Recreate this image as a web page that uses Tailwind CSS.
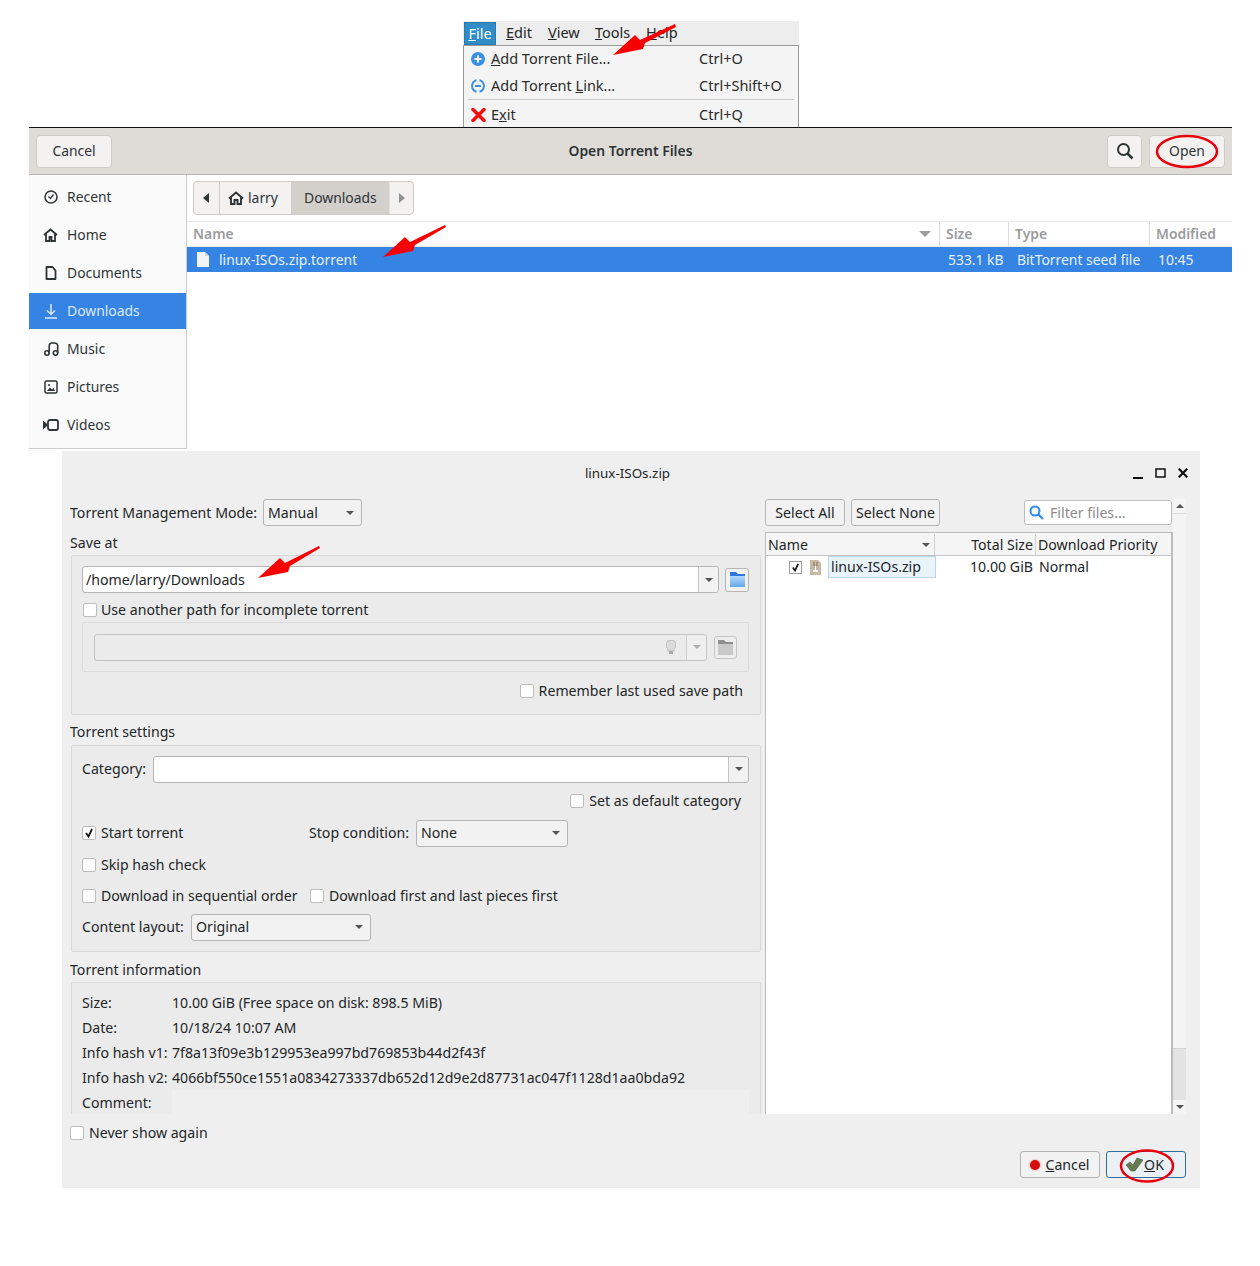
<!DOCTYPE html>
<html lang="en">
<head>
<meta charset="utf-8">
<title>qBittorrent add torrent steps</title>
<script src="https://cdn.jsdelivr.net/npm/@tailwindcss/browser@4"></script>
</head>
<body class="bg-white">
<div class="relative w-[1260px] h-[1266px] overflow-hidden bg-white font-['Noto_Sans','Open_Sans',sans-serif] text-[14.15px] leading-[20px] text-[#2b2b2b]">

  <!-- qBittorrent File menu -->
  <section class="absolute left-[463px] top-[21px] w-[336px] h-[106px] bg-[#f0f0f0] flex flex-col text-[14.5px] [&_span]:-translate-y-px">
    <div class="h-[24px] flex items-center bg-[#ededed] text-[#232627]">
      <div class="ml-[1px] w-[32px] h-[23px] mt-[1px] bg-[#308cc6] border border-[#2a7cb0] text-white flex items-center justify-center"><span><span class="underline">F</span>ile</span></div>
      <span class="ml-[10px] w-[42px]"><span class="underline">E</span>dit</span>
      <span class="w-[47px]"><span class="underline">V</span>iew</span>
      <span class="w-[51px]"><span class="underline">T</span>ools</span>
      <span><span class="underline">H</span>elp</span>
    </div>
    <div class="flex-1 border border-b-0 border-[#9b9b9b] bg-[#f4f4f4] flex flex-col">
      <div class="h-[26px] flex items-center pl-[7px]">
        <svg class="w-[14px] h-[14px]" viewBox="0 0 14 14"><circle cx="7" cy="7" r="7" fill="#3a8fe8"/><path d="M7 3.500v7M3.500 7h7" stroke="#fff" stroke-width="2"/></svg>
        <span class="ml-[6px] w-[208px]"><span class="underline">A</span>dd Torrent File...</span><span>Ctrl+O</span>
      </div>
      <div class="h-[27px] flex items-center pl-[7px]">
        <svg class="w-[14px] h-[14px]" viewBox="0 0 14 14"><circle cx="7" cy="7" r="6" fill="none" stroke="#3a8fe8" stroke-width="2"/><path d="M5.500 1h3M5.500 13h3" stroke="#f4f4f4" stroke-width="2.500"/><path d="M4 7h6" stroke="#3a8fe8" stroke-width="2"/></svg>
        <span class="ml-[6px] w-[208px]">Add Torrent <span class="underline">L</span>ink...</span><span>Ctrl+Shift+O</span>
      </div>
      <div class="mx-[4px] h-[1px] bg-[#c8c8c8]"></div>
      <div class="h-[30px] flex items-center pl-[7px]">
        <svg class="w-[15px] h-[14px]" viewBox="0 0 15 14"><path d="M2 1.500 13 12.500M13 1.500 2 12.500" stroke="#f01010" stroke-width="3.500" stroke-linecap="round"/></svg>
        <span class="ml-[5px] w-[208px]">E<span class="underline">x</span>it</span><span>Ctrl+Q</span>
      </div>
    </div>
  </section>

  <!-- GTK file chooser -->
  <section class="absolute left-[29px] top-[127px] w-[1203px] h-[322px] bg-white border-t border-[#111] flex flex-col text-[#2e3436] text-[13.9px]">
    <header class="h-[47px] shrink-0 bg-[#dfdcd8] border-b border-[#b8b4af] flex items-center pl-[7px] pr-[7px]">
      <div class="w-[118px] shrink-0 flex">
        <div class="w-[76px] h-[33px] rounded-[4px] bg-[#f4f2f1] border border-[#cfcbc6] flex items-center justify-center"><span>Cancel</span></div>
      </div>
      <div class="flex-1 flex justify-center font-semibold"><span>Open Torrent Files</span></div>
      <div class="w-[35px] h-[33px] rounded-[4px] bg-[#f4f2f1] border border-[#cfcbc6] flex items-center justify-center mr-[7px]">
        <svg class="w-[18px] h-[18px]" viewBox="0 0 18 18"><circle cx="7.500" cy="7.500" r="5.500" fill="none" stroke="#2e3436" stroke-width="2"/><path d="M11.500 11.500 16.500 16.500" stroke="#2e3436" stroke-width="2.500"/></svg>
      </div>
      <div class="w-[76px] h-[33px] rounded-[4px] bg-[#f4f2f1] border border-[#cfcbc6] flex items-center justify-center"><span>Open</span></div>
    </header>
    <div class="flex-1 flex min-h-0">
      <aside class="w-[158px] shrink-0 bg-[#fafafa] border-r border-b border-[#cfcdc9] pt-[4px] flex flex-col gap-[2px]">
        <div class="h-[36px] flex items-center pl-[15px]">
          <svg class="w-[14px] h-[14px]" viewBox="0 0 14 14"><circle cx="7" cy="7" r="6" fill="none" stroke="#2e3436" stroke-width="1.500"/><path d="M4.500 6.500 6.500 8.500 9.500 4.500" fill="none" stroke="#2e3436" stroke-width="1.300"/></svg>
          <span class="ml-[9px]">Recent</span></div>
        <div class="h-[36px] flex items-center pl-[14px]">
          <svg class="w-[15px] h-[14px]" viewBox="0 0 15 14"><path d="M1 7 7.500 1.500 14 7M3 6v7h3.500V9h2v4H12V6" fill="none" stroke="#2e3436" stroke-width="1.800"/></svg>
          <span class="ml-[9px]">Home</span></div>
        <div class="h-[36px] flex items-center pl-[16px]">
          <svg class="w-[12px] h-[14px]" viewBox="0 0 12 14"><path d="M1.500 1h6l3 3.500V13h-9z" fill="none" stroke="#2e3436" stroke-width="1.800" stroke-linejoin="round"/></svg>
          <span class="ml-[10px]">Documents</span></div>
        <div class="h-[36px] flex items-center pl-[15px] bg-[#3584e4] text-[#dbe8fa]">
          <svg class="w-[14px] h-[15px]" viewBox="0 0 14 15"><path d="M7 0v10M3 6.500 7 10.500 11 6.500M1 14h12" fill="none" stroke="#dbe8fa" stroke-width="1.500"/></svg>
          <span class="ml-[9px]">Downloads</span></div>
        <div class="h-[36px] flex items-center pl-[15px]">
          <svg class="w-[15px] h-[14px]" viewBox="0 0 15 14"><circle cx="3" cy="11" r="2.200" fill="none" stroke="#2e3436" stroke-width="1.600"/><circle cx="11.500" cy="11" r="2.200" fill="none" stroke="#2e3436" stroke-width="1.600"/><path d="M5.200 11V4q0-3 3-3h2q3.500 0 3.500 3v7" fill="none" stroke="#2e3436" stroke-width="1.600"/></svg>
          <span class="ml-[8px]">Music</span></div>
        <div class="h-[36px] flex items-center pl-[15px]">
          <svg class="w-[14px] h-[14px]" viewBox="0 0 14 14"><rect x="1" y="1" width="12" height="12" rx="1.500" fill="none" stroke="#2e3436" stroke-width="1.500"/><path d="M3 11 6 7.500 8 9.500 9.500 8 11 11z" fill="#2e3436"/><circle cx="5" cy="5" r="1" fill="#2e3436"/></svg>
          <span class="ml-[9px]">Pictures</span></div>
        <div class="h-[36px] flex items-center pl-[14px]">
          <svg class="w-[16px] h-[12px]" viewBox="0 0 16 12"><path d="M0 1.500 4 5V7L0 10.500z" fill="#2e3436"/><rect x="5" y="1" width="10" height="10" rx="2" fill="none" stroke="#2e3436" stroke-width="1.800"/></svg>
          <span class="ml-[8px]">Videos</span></div>
      </aside>
      <div class="flex-1 flex flex-col min-w-0">
        <div class="h-[46px] shrink-0 pt-[6px] pl-[6px]">
          <div class="w-[221px] h-[34px] flex rounded-[4px] border border-[#cfcbc6] overflow-hidden bg-[#f4f2f1]">
            <div class="w-[26px] border-r border-[#cfcbc6] flex items-center justify-center"><svg class="w-[7px] h-[10px]" viewBox="0 0 7 10"><path d="M6 0v10L0 5z" fill="#2e3436"/></svg></div>
            <div class="w-[72px] border-r border-[#cfcbc6] flex items-center pl-[8px] gap-[4px]">
              <svg class="w-[16px] h-[14px]" viewBox="0 0 16 14"><path d="M1 7.500 8 1.500 15 7.500M3 6.500V13h3.500V9h3v4H13V6.500" fill="none" stroke="#2e3436" stroke-width="1.900"/></svg>
              <span>larry</span></div>
            <div class="w-[97px] bg-[#d3cfcb] flex items-center pl-[12px]"><span>Downloads</span></div>
            <div class="flex-1 border-l border-[#e4e1de] flex items-center justify-center"><svg class="w-[7px] h-[10px]" viewBox="0 0 7 10"><path d="M1 0v10l6-5z" fill="#8f9294"/></svg></div>
          </div>
        </div>
        <div class="h-[26px] shrink-0 flex items-center border-t border-b border-[#ecebe9] font-semibold text-[#9a9c9d]">
          <div class="w-[752px] pl-[6px] flex justify-between items-center pr-[8px]"><span>Name</span><svg class="w-[12px] h-[6px]" viewBox="0 0 12 6"><path d="M0 0h12L6 6z" fill="#9a9c9d"/></svg></div>
          <div class="w-[69px] h-full border-l border-[#dcdcda] pl-[6px] flex items-center"><span>Size</span></div>
          <div class="w-[141px] h-full border-l border-[#dcdcda] pl-[6px] flex items-center"><span>Type</span></div>
          <div class="flex-1 h-full border-l border-[#dcdcda] pl-[6px] flex items-center"><span>Modified</span></div>
        </div>
        <div class="h-[25px] shrink-0 flex items-center bg-[#3584e4] text-[#e6f0fc]">
          <div class="w-[761px] pl-[10px] flex items-center gap-[10px]">
            <svg class="w-[12px] h-[15px]" viewBox="0 0 12 15"><path d="M0 0h8l4 4v11H0z" fill="#f2f4f5"/><path d="M8 0v4h4" fill="#cfd8e2"/></svg>
            <span>linux-ISOs.zip.torrent</span></div>
          <span class="w-[69px]">533.1 kB</span>
          <span class="w-[141px]">BitTorrent seed file</span>
          <span>10:45</span>
        </div>
      </div>
    </div>
  </section>

  <!-- qBittorrent add torrent dialog -->
  <section class="absolute left-[62px] top-[451px] w-[1138px] h-[737px] bg-[#efefef] flex flex-col text-[#232627]">
    <header class="h-[48px] shrink-0 flex items-center relative">
      <div class="w-full flex justify-center text-[13.4px] -mt-[4px] pr-[7px]"><span>linux-ISOs.zip</span></div>
      <div class="absolute right-[12px] top-[16px] flex items-center gap-[12px]">
        <svg class="w-[10px] h-[12px]" viewBox="0 0 10 12"><path d="M0 11h10" stroke="#111" stroke-width="2"/></svg>
        <svg class="w-[11px] h-[10px]" viewBox="0 0 11 10"><rect x="1" y="1" width="9" height="8" fill="none" stroke="#111" stroke-width="1.500"/></svg>
        <svg class="w-[10px] h-[10px]" viewBox="0 0 10 10"><path d="M.7.7 9.300 9.300M9.300.7.7 9.300" stroke="#111" stroke-width="2.200"/></svg>
      </div>
    </header>
    <div class="h-[615px] shrink-0 flex">
      <!-- left column -->
      <div class="w-[703px] shrink-0 pl-[8px] pr-[4px] flex flex-col min-h-0 overflow-hidden">
        <div class="h-[27px] shrink-0 flex items-center gap-[6px]">
          <span class="w-[187px] whitespace-nowrap">Torrent Management Mode:</span>
          <div class="w-[99px] h-[27px] rounded-[3px] border border-[#b5b5b5] bg-[#f2f2f2] flex items-center justify-between pl-[4px] pr-[7px]"><span>Manual</span><svg class="w-[8px] h-[4px]" viewBox="0 0 8 4"><path d="M0 0h8L4 4z" fill="#555"/></svg></div>
        </div>
        <div class="h-[29px] shrink-0 flex items-center pt-[5px]"><span>Save at</span></div>
        <div class="h-[160px] ml-[1px] shrink-0 bg-[#ebebeb] border border-[#d9d9d9] rounded-[2px] px-[10px] pt-[10px] flex flex-col">
          <div class="flex items-center h-[27px] shrink-0">
            <div class="w-[637px] h-[27px] rounded-[3px] border border-[#b5b5b5] bg-white flex items-center">
              <span class="flex-1 pl-[3px]">/home/larry/Downloads</span>
              <div class="w-[20px] h-full border-l border-[#c4c4c4] bg-[#f2f2f2] flex items-center justify-center rounded-r-[3px]"><svg class="w-[8px] h-[4px]" viewBox="0 0 8 4"><path d="M0 0h8L4 4z" fill="#555"/></svg></div>
            </div>
            <div class="ml-[6px] w-[24px] h-[24px] rounded-[3px] border border-[#b5b5b5] bg-[#f2f2f2] flex items-center justify-center">
              <svg class="w-[17px] h-[17px]" viewBox="0 0 17 17"><defs><linearGradient id="fb" x1="0" y1="0" x2="0" y2="1"><stop offset="0" stop-color="#b5d9f8"/><stop offset="1" stop-color="#62a8ec"/></linearGradient></defs><path d="M1 1h6l2 2h7v13H1z" fill="#2a78dc"/><path d="M1 5h15v11H1z" fill="url(#fb)"/></svg>
            </div>
          </div>
          <div class="h-[29px] shrink-0 flex items-center gap-[4px] pt-[4px]">
            <span class="w-[14px] h-[14px] border border-[#bdbdbd] bg-white rounded-[2px] ml-[1px]"></span><span>Use another path for incomplete torrent</span>
          </div>
          <div class="h-[50px] shrink-0 w-[667px] border border-[#dcdcdc] rounded-[2px] pl-[11px] flex items-center">
            <div class="w-[613px] h-[27px] rounded-[3px] border border-[#c4c4c4] bg-[#ebebeb] flex items-center justify-end">
              <svg class="w-[10px] h-[14px] mr-[10px]" viewBox="0 0 10 14"><path d="M5 0a5 5 0 0 1 3 9v2H2V9a5 5 0 0 1 3-9z" fill="#dcdcdc" stroke="#bbb"/><rect x="3" y="11" width="4" height="3" fill="#aaa"/></svg>
              <div class="w-[20px] h-full border-l border-[#cfcfcf] bg-[#efefef] flex items-center justify-center rounded-r-[3px]"><svg class="w-[8px] h-[4px]" viewBox="0 0 8 4"><path d="M0 0h8L4 4z" fill="#b0b0b0"/></svg></div>
            </div>
            <div class="ml-[7px] w-[23px] h-[23px] rounded-[3px] border border-[#c4c4c4] bg-[#ededed] flex items-center justify-center">
              <svg class="w-[17px] h-[17px]" viewBox="0 0 17 17"><path d="M1 1h6l2 2h7v13H1z" fill="#8f8f8f"/><path d="M1 5h15v11H1z" fill="#c9c9c9"/></svg>
            </div>
          </div>
          <div class="h-[38px] shrink-0 flex items-center justify-end gap-[5px] pr-[7px]">
            <span class="w-[14px] h-[14px] border border-[#bdbdbd] bg-white rounded-[2px]"></span><span>Remember last used save path</span>
          </div>
        </div>
        <div class="h-[30px] shrink-0 flex items-center pt-[4px]"><span>Torrent settings</span></div>
        <div class="h-[207px] ml-[1px] shrink-0 bg-[#ebebeb] border border-[#d9d9d9] rounded-[2px] pl-[10px] pr-[11px] flex flex-col">
          <div class="h-[46px] shrink-0 flex items-center gap-[7px]">
            <span class="w-[64px] whitespace-nowrap">Category:</span>
            <div class="flex-1 h-[27px] rounded-[3px] border border-[#b5b5b5] bg-white flex justify-end">
              <div class="w-[20px] h-full border-l border-[#c4c4c4] bg-[#f2f2f2] flex items-center justify-center rounded-r-[3px]"><svg class="w-[8px] h-[4px]" viewBox="0 0 8 4"><path d="M0 0h8L4 4z" fill="#555"/></svg></div>
            </div>
          </div>
          <div class="h-[18px] shrink-0 flex items-center justify-end gap-[5px] pr-[8px]">
            <span class="w-[14px] h-[14px] border border-[#bdbdbd] bg-white rounded-[2px]"></span><span>Set as default category</span>
          </div>
          <div class="h-[46px] shrink-0 flex items-center">
            <span class="w-[14px] h-[14px] border border-[#bdbdbd] bg-white rounded-[2px] flex items-center justify-center"><svg class="w-[10px] h-[10px]" viewBox="0 0 10 10"><path d="M2 5 4.500 8.500 8 1" fill="none" stroke="#111" stroke-width="1.800"/></svg></span>
            <span class="ml-[5px] w-[208px]">Start torrent</span>
            <span class="w-[100px] whitespace-nowrap">Stop condition:</span>
            <div class="ml-[7px] w-[152px] h-[27px] rounded-[3px] border border-[#b5b5b5] bg-[#f2f2f2] flex items-center justify-between pl-[4px] pr-[7px]"><span>None</span><svg class="w-[8px] h-[4px]" viewBox="0 0 8 4"><path d="M0 0h8L4 4z" fill="#555"/></svg></div>
          </div>
          <div class="h-[18px] shrink-0 flex items-center gap-[5px]">
            <span class="w-[14px] h-[14px] border border-[#bdbdbd] bg-white rounded-[2px]"></span><span>Skip hash check</span>
          </div>
          <div class="h-[44px] shrink-0 flex items-center">
            <span class="w-[14px] h-[14px] border border-[#bdbdbd] bg-white rounded-[2px]"></span><span class="ml-[5px] w-[209px] whitespace-nowrap">Download in sequential order</span>
            <span class="w-[14px] h-[14px] border border-[#bdbdbd] bg-white rounded-[2px]"></span><span class="ml-[5px]">Download first and last pieces first</span>
          </div>
          <div class="h-[18px] shrink-0 flex items-center gap-[7px]">
            <span class="w-[102px] whitespace-nowrap">Content layout:</span>
            <div class="w-[180px] h-[27px] rounded-[3px] border border-[#b5b5b5] bg-[#f2f2f2] flex items-center justify-between pl-[4px] pr-[7px]"><span>Original</span><svg class="w-[8px] h-[4px]" viewBox="0 0 8 4"><path d="M0 0h8L4 4z" fill="#555"/></svg></div>
          </div>
        </div>
        <div class="h-[30px] shrink-0 flex items-center pt-[6px]"><span>Torrent information</span></div>
        <div class="h-[132px] ml-[1px] shrink-0 bg-[#ebebeb] border-l border-t border-r border-[#d9d9d9] rounded-t-[2px] pl-[10px] pr-[11px] pt-[7px] flex flex-col">
          <div class="h-[25px] shrink-0 flex items-center"><span class="w-[90px]">Size:</span><span>10.00 GiB (Free space on disk: 898.5 MiB)</span></div>
          <div class="h-[25px] shrink-0 flex items-center"><span class="w-[90px]">Date:</span><span>10/18/24 10:07 AM</span></div>
          <div class="h-[25px] shrink-0 flex items-center"><span class="w-[90px]">Info hash v1:</span><span>7f8a13f09e3b129953ea997bd769853b44d2f43f</span></div>
          <div class="h-[25px] shrink-0 flex items-center"><span class="w-[90px]">Info hash v2:</span><span>4066bf550ce1551a0834273337db652d12d9e2d87731ac047f1128d1aa0bda92</span></div>
          <div class="flex-1 flex"><span class="w-[90px] pt-[3px]">Comment:</span><div class="flex-1 bg-[#efefef]"></div></div>
        </div>
      </div>
      <!-- right column -->
      <div class="flex-1 flex pr-[14px] min-w-0">
        <div class="flex-1 min-w-0 flex flex-col">
          <div class="h-[33px] shrink-0 flex items-start">
            <div class="w-[80px] h-[27px] rounded-[3px] border border-[#b5b5b5] bg-[#f2f2f2] flex items-center justify-center"><span>Select All</span></div>
            <div class="ml-[6px] w-[89px] h-[27px] rounded-[3px] border border-[#b5b5b5] bg-[#f2f2f2] flex items-center justify-center"><span>Select None</span></div>
            <div class="ml-auto mr-[1px] mt-[1px] w-[148px] h-[25px] rounded-[3px] border border-[#bdbdbd] bg-white flex items-center pl-[4px] gap-[6px] text-[#8c8c8c]">
              <svg class="w-[15px] h-[15px]" viewBox="0 0 15 15"><circle cx="6" cy="6" r="4.500" fill="none" stroke="#2d8ceb" stroke-width="2"/><path d="M9.500 9.500 14 14" stroke="#2d8ceb" stroke-width="2.200"/></svg>
              <span>Filter files...</span></div>
          </div>
          <div class="flex-1 bg-white border-l border-t border-[#bcbcbc] border-r-2 flex flex-col min-h-0">
            <div class="h-[23px] shrink-0 flex items-center border-b border-[#c4c4c4] bg-[#f5f5f5] pt-[1px]">
              <div class="w-[169px] h-full flex items-center justify-between pl-[2px] pr-[4px] border-r border-[#d0d0d0]"><span>Name</span><svg class="w-[8px] h-[4px]" viewBox="0 0 8 4"><path d="M0 0h8L4 4z" fill="#555"/></svg></div>
              <div class="w-[101px] h-full flex items-center justify-end pr-[2px] border-r border-[#d0d0d0]"><span>Total Size</span></div>
              <span class="pl-[2px]">Download Priority</span>
            </div>
            <div class="h-[22px] shrink-0 flex items-center">
              <span class="ml-[23px] w-[13px] h-[13px] border border-[#9f9f9f] bg-white flex items-center justify-center"><svg class="w-[9px] h-[9px]" viewBox="0 0 10 10"><path d="M2 5 4.500 8.500 8 1" fill="none" stroke="#111" stroke-width="1.800"/></svg></span>
              <svg class="ml-[8px] w-[11px] h-[15px]" viewBox="0 0 11 15"><path d="M0 0h8l3 3v12H0z" fill="#c9b9a3"/><rect x="3" y="6" width="5" height="6" fill="#fff"/><path d="M4 2v8M7 2v8" stroke="#7d6f5c"/></svg>
              <div class="ml-[7px] w-[108px] h-[22px] bg-[#e9f3fa] border border-[#b8d6e8] pl-[2px] flex items-center"><span>linux-ISOs.zip</span></div>
              <span class="w-[97px] text-right">10.00 GiB</span>
              <span class="pl-[6px]">Normal</span>
            </div>
          </div>
        </div>
        <div class="w-[13px] shrink-0 flex flex-col bg-[#f4f4f4]">
          <div class="h-[15px] border-b border-[#dcdcdc] flex items-center justify-center"><svg class="w-[8px] h-[4px]" viewBox="0 0 8 4"><path d="M0 4h8L4 0z" fill="#555"/></svg></div>
          <div class="flex-1"></div>
          <div class="h-[52px] bg-[#e3e3e3] border-t border-[#d4d4d4]"></div>
          <div class="h-[14px] flex items-center justify-center"><svg class="w-[8px] h-[4px]" viewBox="0 0 8 4"><path d="M0 0h8L4 4z" fill="#555"/></svg></div>
        </div>
      </div>
    </div>
    <div class="h-[37px] shrink-0 flex items-center pl-[8px] gap-[5px]">
      <span class="w-[14px] h-[14px] border border-[#bdbdbd] bg-white rounded-[2px]"></span><span>Never show again</span>
    </div>
    <div class="flex items-start justify-end gap-[6px] pr-[14px]">
      <div class="w-[80px] h-[27px] rounded-[3px] border border-[#b5b5b5] bg-[#f2f2f2] flex items-center justify-center gap-[3px] pr-[2px]">
        <svg class="w-[14px] h-[14px]" viewBox="0 0 14 14"><circle cx="7" cy="7" r="6.500" fill="#e6d8d8"/><circle cx="7" cy="7" r="5" fill="#d80b0b"/></svg>
        <span><span class="underline">C</span>ancel</span></div>
      <div class="w-[80px] h-[27px] rounded-[3px] border border-[#2f6f96] bg-[#eaf0f4] flex items-center justify-center gap-[1px] pr-[2px]">
        <svg class="w-[17px] h-[15px]" viewBox="0 0 17 15"><path d="M0 8 4 5 7 8 11 1 17 3 9 14H5z" fill="#66794f" stroke="#3f4f36" stroke-width=".5"/></svg>
        <span><span class="underline">O</span>K</span></div>
    </div>
  </section>

  <!-- Annotations lying over the screenshots -->
  <svg class="absolute left-0 top-0 w-[1260px] h-[1266px] pointer-events-none" viewBox="0 0 1260 1266">
    <g fill="#f80000">
      <path d="M613 55 635 35 640 40 675 24 676 27 645 43 643 49z"/>
      <path d="M383 257 405 237 410 242 445 225 446 227 415 245 413 251z"/>
      <path d="M258 578 280 558 285 563 319 546 320 548 290 566 288 572z"/>
    </g>
    <ellipse cx="1187" cy="151.500" rx="30" ry="15.500" fill="none" stroke="#e8000b" stroke-width="2.500"/>
    <ellipse cx="1147" cy="1166" rx="26" ry="15.500" fill="none" stroke="#e8000b" stroke-width="2.500"/>
  </svg>
</div>
</body>
</html>
